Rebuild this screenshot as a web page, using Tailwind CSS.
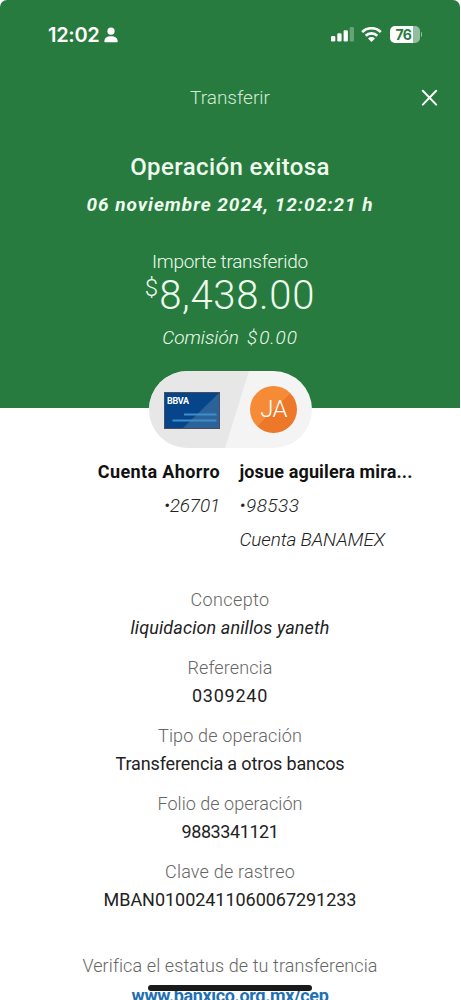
<!DOCTYPE html>
<html lang="es">
<head>
<meta charset="utf-8">
<title>Transferir</title>
<script src="https://cdn.jsdelivr.net/npm/@tailwindcss/browser@4"></script>
</head>
<body class="bg-white">
<div class="relative w-[461px] h-[1000px] overflow-hidden bg-white font-['Roboto',sans-serif] text-[#222]">
  <header class="h-[408px] w-[460px] bg-[#277b3e] rounded-t-[7px] text-[#effbef] flex flex-col items-center">
    <!-- Status bar -->
    <div class="h-[70px] w-full flex items-center pl-[48px] pr-[38px] text-white">
      <span class="font-['Inter',sans-serif] font-semibold text-[20px] tracking-[-0.3px] leading-none">12:02</span>
      <svg class="ml-[5px]" width="14" height="16" viewBox="0 0 14 16" fill="#fff"><circle cx="7" cy="4.2" r="3.6"/><path d="M.3 14.6C.3 11 3 9.2 7 9.2s6.700 1.800 6.700 5.400c0 .4-.3.6-.7.6H1c-.4 0-.7-.2-.7-.6Z"/></svg>
      <svg class="ml-auto" width="24" height="16" viewBox="0 0 24 16" fill="#fff"><rect x="0" y="9" width="4.300" height="5.500" rx="1.200"/><rect x="6.300" y="6.200" width="4.300" height="8.300" rx="1.200"/><rect x="12.600" y="3.200" width="4.300" height="11.300" rx="1.200"/><rect x="18.700" y="0" width="4.300" height="14.500" rx="1.200" opacity=".3"/></svg>
      <svg class="ml-[6px]" width="21" height="16" viewBox="0 0 21 16" fill="none" stroke="#fff" stroke-width="2.700"><path d="M1.200 5.100a13.200 13.200 0 0 1 18.600 0"/><path d="M4.700 8.800a8.200 8.200 0 0 1 11.600 0"/><path d="M10.500 15 7 11.500a5 5 0 0 1 7 0Z" fill="#fff" stroke="none"/></svg>
      <div class="ml-[8px] -mt-px flex items-center">
        <div class="w-[30px] h-[17px] rounded-[5px] bg-linear-to-r from-white from-76% to-[#93bd9e] to-76% text-[#277b3e] font-['Inter',sans-serif] font-bold text-[14px] tracking-[-0.7px] leading-[17px] pl-[6px]">76</div>
        <div class="ml-px w-[1.500px] h-[5px] rounded-r bg-[#93bd9e]"></div>
      </div>
    </div>
    <div class="h-[56px] w-full flex items-center justify-center relative text-[19px] font-light text-[#d3ead6]">Transferir<svg class="absolute right-[22px] top-[19px]" width="17" height="17" viewBox="0 0 17 17" stroke="#fff" stroke-width="2" stroke-linecap="round"><path d="M1.800 1.800 15.200 15.600M15.200 1.800 1.800 15.600"/></svg></div>
    <div class="h-[38px] mt-[22px] leading-[38px] text-[24px] font-medium tracking-[0.380px]">Operación exitosa</div>
    <div class="h-[38px] leading-[38px] text-[19px] font-bold italic tracking-[0.980px]">06 noviembre 2024, 12:02:21 h</div>
    <div class="h-[30px] mt-[22px] leading-[32px] text-[19px] font-light tracking-[-0.250px]">Importe transferido</div>
    <div class="h-[40px] flex leading-[40px] font-light"><span class="text-[24px] leading-[25px] mr-px">$</span><span class="text-[40px] tracking-[0.700px]">8,438.00</span></div>
    <div class="h-[40px] leading-[44px] text-[19px] font-light italic flex"><span class="mr-[8px]">Comisión</span><span class="mr-[2px]">$</span><span class="tracking-[0.900px]">0.00</span></div>
  </header>

  <!-- Origin and destination -->
  <div class="relative -mt-[37px] ml-[149px] w-[163px] h-[77px] rounded-full overflow-hidden bg-[#f4f4f4] flex items-center">
    <svg class="absolute inset-0" width="163" height="77" viewBox="0 0 163 77"><path d="M0 0H100L76 77H0Z" fill="#e7e7e7"/></svg>
    <div class="relative ml-[15px] mt-[2px] w-[56px] h-[37px]">
      <svg class="absolute inset-0" width="56" height="37" viewBox="0 0 56 37"><rect x=".5" y=".5" width="55" height="36" fill="#06458a" stroke="#4b4d5c"/><path d="M55 1V36H19Z" fill="#2b6399"/><path d="M20 22.500H52.500M8.500 28.500H52.500" stroke="#3f8dca" stroke-width="2"/></svg>
      <span class="absolute left-[3px] top-[4px] text-[9px] leading-[10px] font-bold tracking-[-0.300px] text-white">BBVA</span>
    </div>
    <div class="relative ml-[30px] w-[47px] h-[47px] rounded-full bg-linear-135 from-[#f68b37] from-50% to-[#ed7829] to-50% text-white text-[24px] font-light tracking-[-0.700px] leading-[46px] text-center">JA</div>
  </div>

  <div class="mt-[7px] grid grid-cols-[220px_1fr] gap-x-[19.500px] leading-[34px] text-[19px] font-light italic">
    <div class="text-right">
      <div class="text-[18px] font-bold not-italic tracking-[0.380px] text-[#111]">Cuenta Ahorro</div>
      <div class="tracking-[-0.180px]">•26701</div>
    </div>
    <div>
      <div class="text-[18px] font-bold not-italic tracking-[0.140px] text-[#111]">josue aguilera mira...</div>
      <div class="tracking-[0.480px]">•98533</div>
      <div class="tracking-[-0.150px]">Cuenta BANAMEX</div>
    </div>
  </div>

  <!-- Details -->
  <dl class="mt-[29px] w-[460px] text-center text-[18px] leading-[28px] flex flex-col gap-[12px]">
    <div><dt class="font-light text-[#666] tracking-[0.380px]">Concepto</dt><dd class="italic tracking-[0.110px]">liquidacion anillos yaneth</dd></div>
    <div><dt class="font-light text-[#666] tracking-[0.110px]">Referencia</dt><dd class="tracking-[0.740px]">0309240</dd></div>
    <div><dt class="font-light text-[#666] tracking-[0.180px]">Tipo de operación</dt><dd class="tracking-[-0.150px]">Transferencia a otros bancos</dd></div>
    <div><dt class="font-light text-[#666] tracking-[0.040px]">Folio de operación</dt><dd class="tracking-[-0.420px]">9883341121</dd></div>
    <div><dt class="font-light text-[#666] tracking-[0.200px]">Clave de rastreo</dt><dd class="tracking-[-0.040px]">MBAN01002411060067291233</dd></div>
  </dl>
  <div class="mt-[37px] w-[460px] text-center text-[18px] leading-[30px]">
    <p class="font-light text-[#666] tracking-[0.100px]">Verifica el estatus de tu transferencia</p>
    <p class="font-bold text-[#1f70b2] tracking-[-0.370px]">www.banxico.org.mx/cep</p>
  </div>
  <div class="absolute left-[148px] top-[985px] w-[164px] h-[6px] rounded-full bg-[#1a1a1a]"></div>
</div>
</body>
</html>
